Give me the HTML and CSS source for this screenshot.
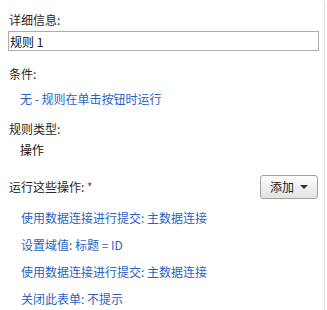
FILE: index.html
```html
<!doctype html>
<html>
<head>
<meta charset="utf-8">
<title>规则详细信息</title>
<link rel="stylesheet" href="styles.css">
</head>
<body>
	<div class="panel">
		<div class="label top">详细信息:</div>
		<input class="name-box" type="text" value="规则 1">

		<div class="label gap-cond">条件:</div>
		<div class="link sub gap-small">无 - 规则在单击按钮时运行</div>

		<div class="label gap-type">规则类型:</div>
		<div class="plain sub gap-tiny">操作</div>

		<div class="action-row">
			<div class="label">运行这些操作: <span class="req">*</span></div>
			<div class="add-btn">添加 <span class="arrow"></span></div>
		</div>

		<ul class="actions">
			<li class="link">使用数据连接进行提交: 主数据连接</li>
			<li class="link">设置域值: 标题 = ID</li>
			<li class="link">使用数据连接进行提交: 主数据连接</li>
			<li class="link">关闭此表单: 不提示</li>
		</ul>
	</div>
</body>
</html>
```

FILE: styles.css
```css
body {
	margin: 0;
	background: #fff;
	font-family: "Noto Sans CJK SC", sans-serif;
	font-size: 12px;
	color: #262626;
}

.panel {
	width: 311px;
	height: 310px;
	padding: 12px 5px 0 8px;
	box-sizing: content-box;
	border-right: 1px solid #d6dde6;
	border-top-right-radius: 4px;
	border-top: 1px solid #eef1f4;
	margin-top: -1px;
}

.label {
	line-height: 16px;
	padding-left: 1px;
}

.name-box {
	display: block;
	box-sizing: border-box;
	width: 311px;
	height: 20px;
	margin: 3px 0 0 0;
	padding: 0 1px;
	border: 1px solid #abadb3;
	font-family: inherit;
	font-size: 12px;
	color: #111;
	outline: none;
}

.gap-cond {
	margin-top: 15px;
}

.gap-small {
	margin-top: 9px;
}

.gap-type {
	margin-top: 14px;
}

.gap-tiny {
	margin-top: 5px;
}

.sub {
	padding-left: 12px;
	line-height: 16px;
}

.link {
	color: #2a62c4;
}

.plain {
	color: #111;
}

.req {
	color: #e02020;
}

.action-row {
	display: flex;
	justify-content: space-between;
	align-items: center;
	margin-top: 17px;
	height: 24px;
}

.add-btn {
	display: flex;
	align-items: center;
	box-sizing: border-box;
	width: 58px;
	height: 24px;
	margin-right: 1px;
	padding-left: 9px;
	border: 1px solid #a3a3a3;
	border-radius: 3px;
	background: linear-gradient(#fdfdfd, #e2e2e2);
	color: #222;
	line-height: 16px;
}

.arrow {
	display: inline-block;
	width: 0;
	height: 0;
	margin-left: 6px;
	border-left: 4px solid transparent;
	border-right: 4px solid transparent;
	border-top: 4px solid #333;
}

.actions {
	list-style-type: none;
	margin: 11px 0 0 0;
	padding: 0 0 0 13px;
}

.actions li {
	line-height: 16px;
	margin-bottom: 11px;
}
```
